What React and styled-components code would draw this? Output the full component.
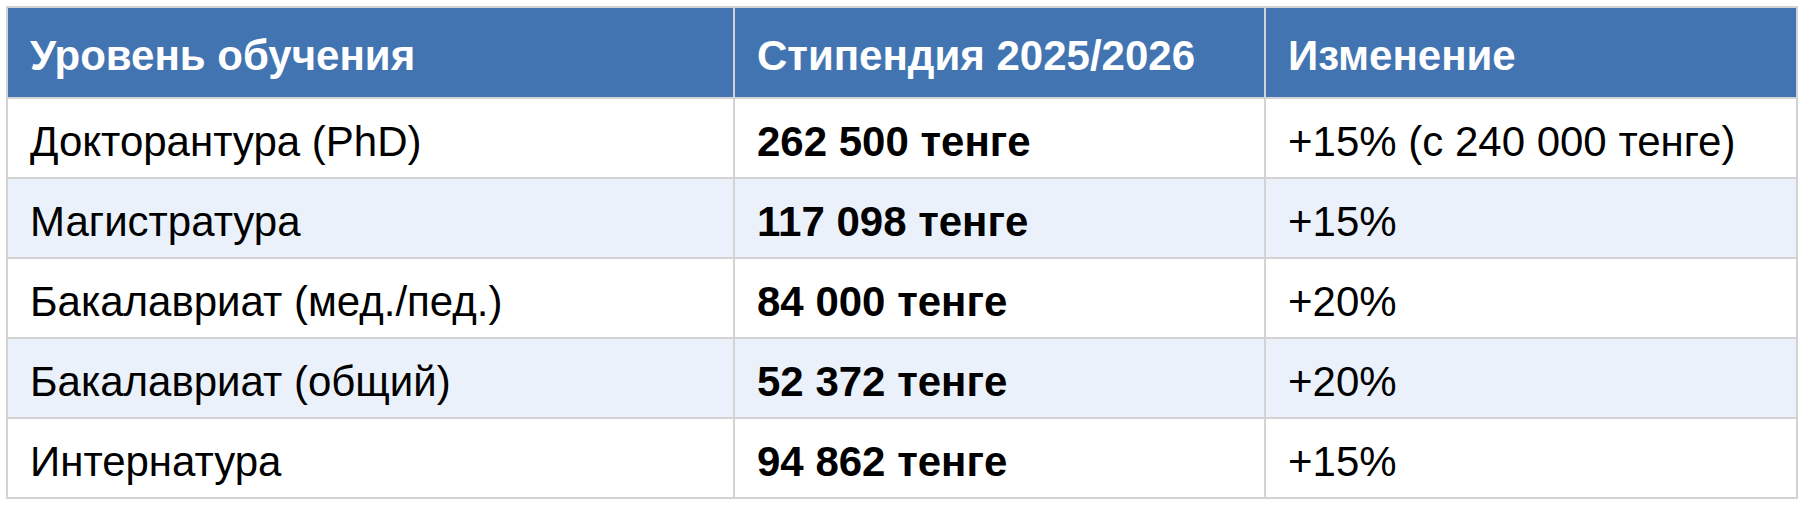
import React from "react";
import styled, { createGlobalStyle } from "styled-components";

const Global = createGlobalStyle`
  html, body { margin: 0; padding: 0; background: #ffffff; }
  body { font-family: "Liberation Sans", Arial, Helvetica, sans-serif; }
`;

const Page = styled.div`
  padding: 6px;
`;

const Table = styled.table`
  width: 1792px;
  table-layout: fixed;
  border-collapse: separate;
  border-spacing: 0;
  border-top: 2px solid #d3d3d3;
  border-left: 2px solid #d3d3d3;
`;

const HeadCell = styled.th`
  height: 82px;
  padding: 7px 22px 0;
  background: #4374b2;
  color: #ffffff;
  font-size: 42px;
  font-weight: 700;
  text-align: left;
  border-right: 2px solid #d3d3d3;
  border-bottom: 2px solid #d3d3d3;
  white-space: nowrap;
`;

const Row = styled.tr`
  background: ${(p) => (p.$striped ? "#ebf1fa" : "#ffffff")};
`;

const Cell = styled.td`
  height: 71px;
  padding: 7px 22px 0;
  color: #000000;
  font-size: 42px;
  font-weight: ${(p) => (p.$bold ? 700 : 400)};
  border-right: 2px solid #d3d3d3;
  border-bottom: 2px solid #d3d3d3;
  white-space: nowrap;
`;

const rows = [
  ["Докторантура (PhD)", "262 500 тенге", "+15% (с 240 000 тенге)"],
  ["Магистратура", "117 098 тенге", "+15%"],
  ["Бакалавриат (мед./пед.)", "84 000 тенге", "+20%"],
  ["Бакалавриат (общий)", "52 372 тенге", "+20%"],
  ["Интернатура", "94 862 тенге", "+15%"],
];

export default function App() {
  return (
    <>
      <Global />
      <Page>
        <Table>
          <colgroup>
            <col style={{ width: 727 }} />
            <col style={{ width: 531 }} />
            <col style={{ width: 532 }} />
          </colgroup>
          <thead>
            <tr>
              <HeadCell>Уровень обучения</HeadCell>
              <HeadCell>Стипендия 2025/2026</HeadCell>
              <HeadCell>Изменение</HeadCell>
            </tr>
          </thead>
          <tbody>
            {rows.map((r, i) => (
              <Row key={r[0]} $striped={i % 2 === 1}>
                <Cell>{r[0]}</Cell>
                <Cell $bold>{r[1]}</Cell>
                <Cell>{r[2]}</Cell>
              </Row>
            ))}
          </tbody>
        </Table>
      </Page>
    </>
  );
}
